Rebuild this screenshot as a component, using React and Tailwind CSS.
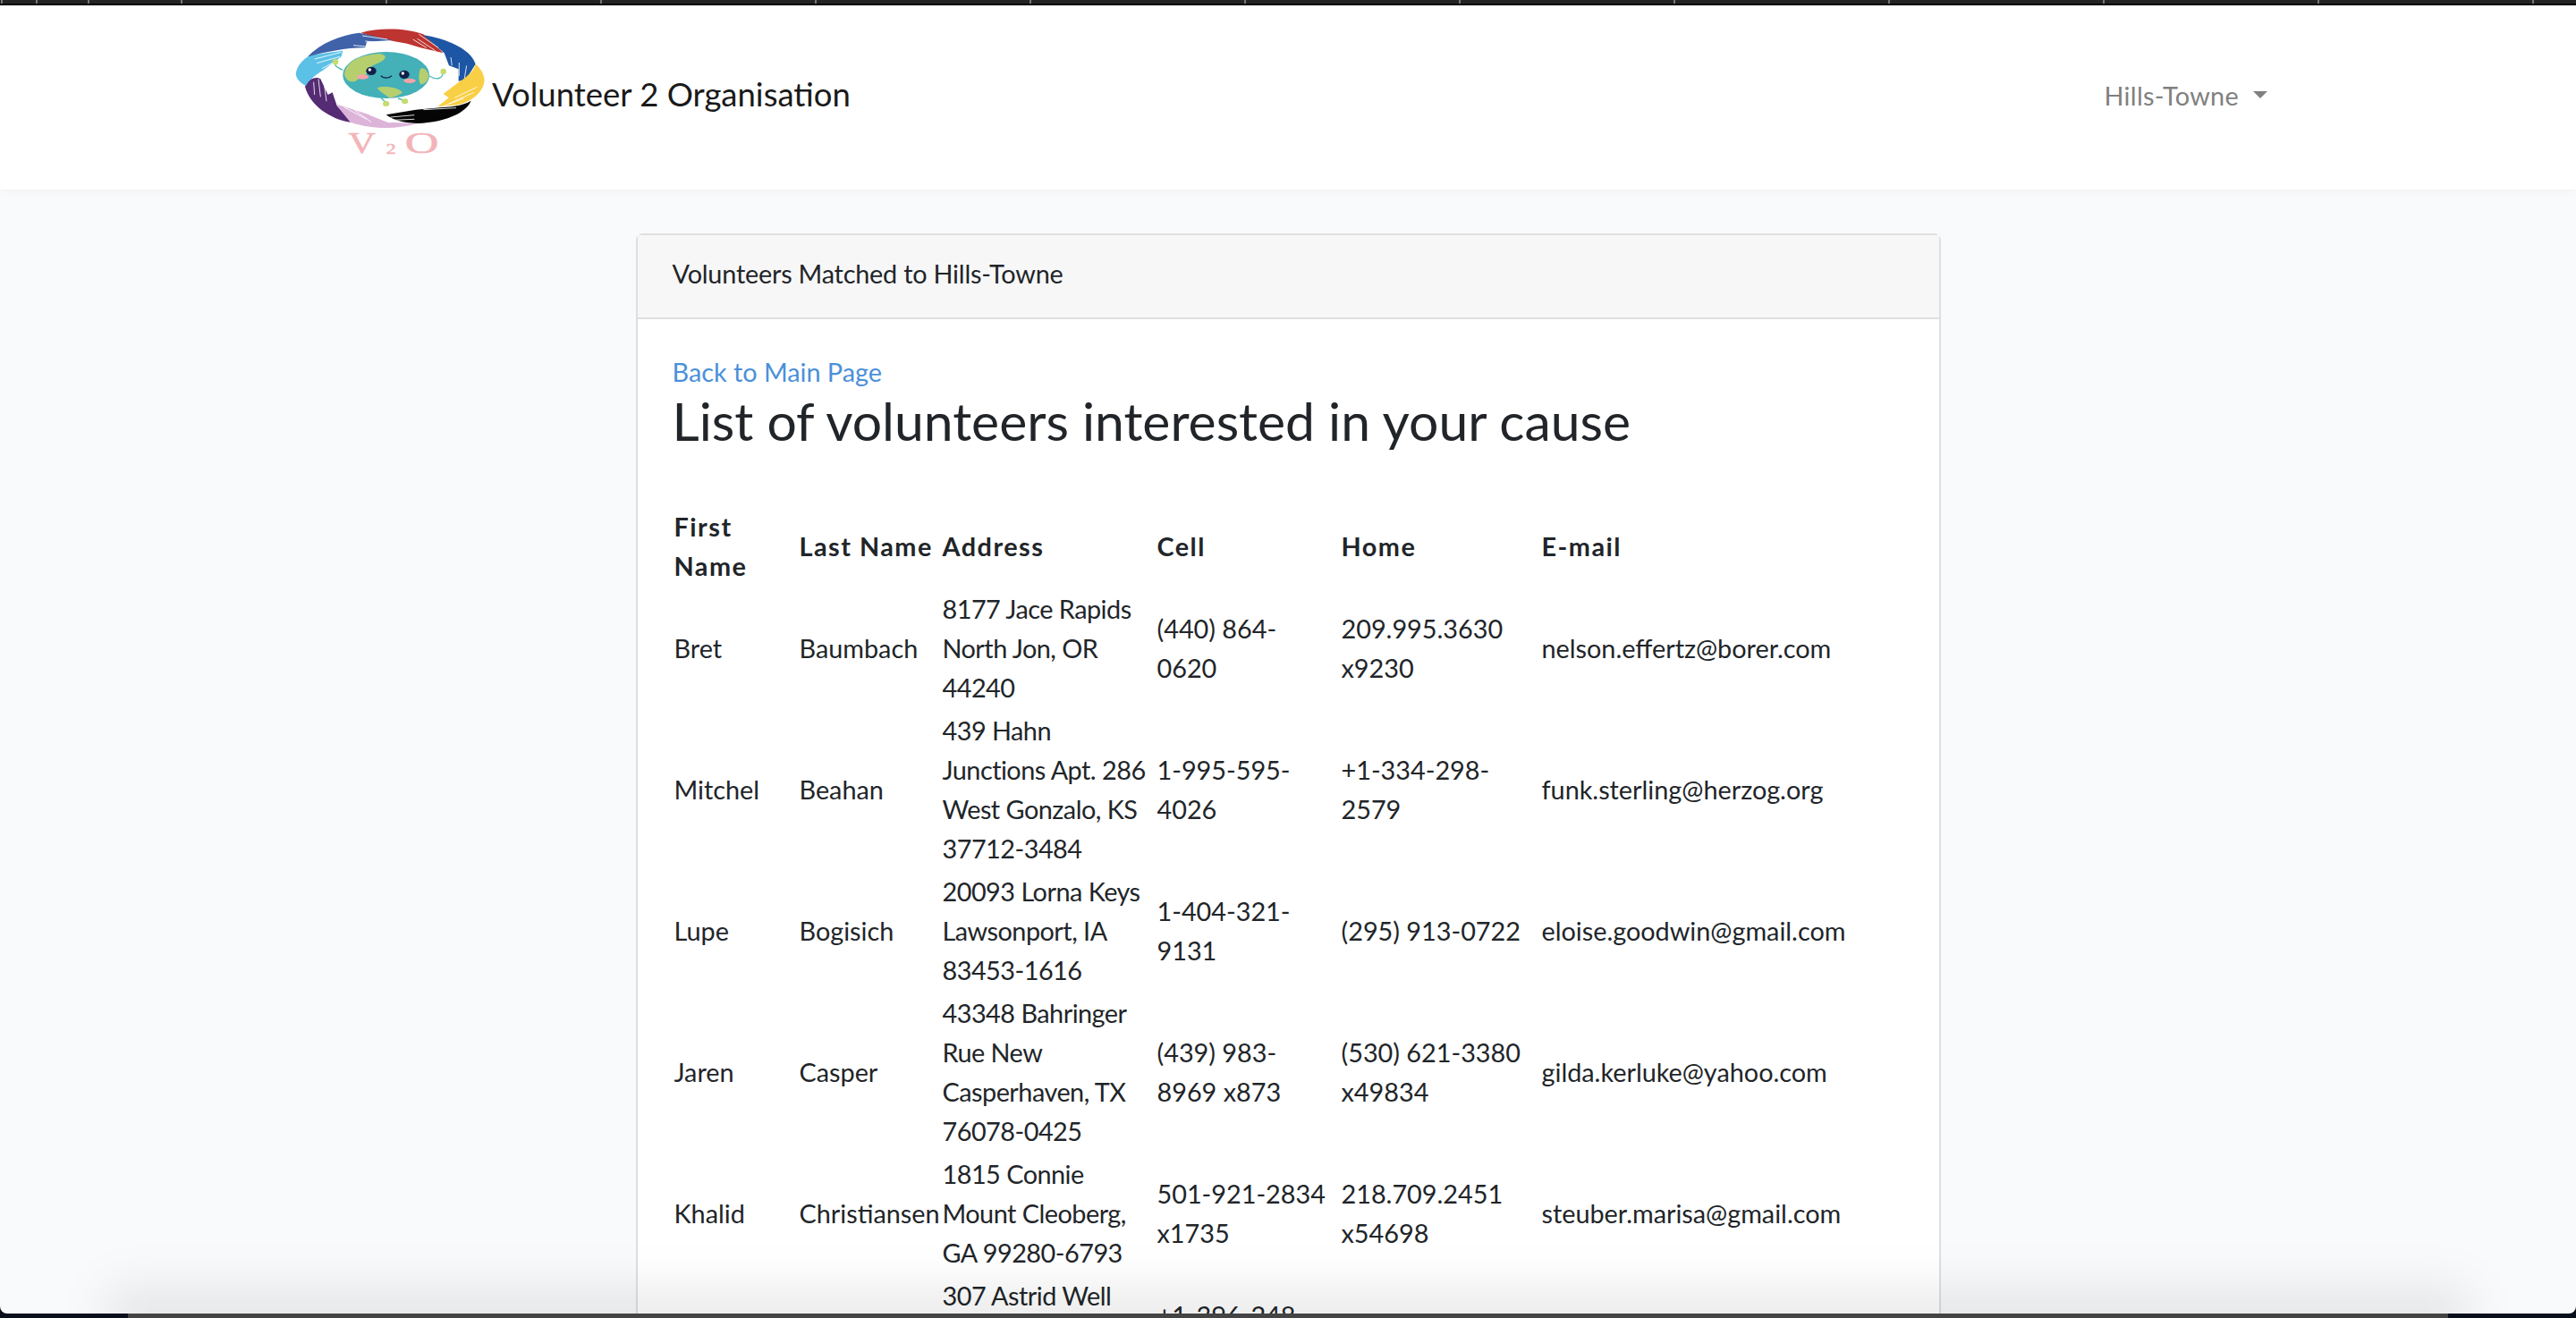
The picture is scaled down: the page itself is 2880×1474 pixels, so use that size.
import React from "react";

const volunteers = [
  { first: "Bret", last: "Baumbach", address: "8177 Jace Rapids North Jon, OR 44240", cell: "(440) 864-0620", home: "209.995.3630 x9230", email: "nelson.effertz@borer.com" },
  { first: "Mitchel", last: "Beahan", address: "439 Hahn Junctions Apt. 286 West Gonzalo, KS 37712-3484", cell: "1-995-595-4026", home: "+1-334-298-2579", email: "funk.sterling@herzog.org" },
  { first: "Lupe", last: "Bogisich", address: "20093 Lorna Keys Lawsonport, IA 83453-1616", cell: "1-404-321-9131", home: "(295) 913-0722", email: "eloise.goodwin@gmail.com" },
  { first: "Jaren", last: "Casper", address: "43348 Bahringer Rue New Casperhaven, TX 76078-0425", cell: "(439) 983-8969 x873", home: "(530) 621-3380 x49834", email: "gilda.kerluke@yahoo.com" },
  { first: "Khalid", last: "Christiansen", address: "1815 Connie Mount Cleoberg, GA 99280-6793", cell: "501-921-2834 x1735", home: "218.709.2451 x54698", email: "steuber.marisa@gmail.com" },
  // only the top of this row shows above the fold
  { first: "", last: "", address: "307 Astrid Well Port Ellis, MN 20518", cell: "+1-396-248-1190", home: "", email: "" },
];

const ticks = [1, 40, 98, 202, 431, 671, 911, 1151, 1391, 1631, 1871, 2111, 2351, 2591, 2831];

const Logo = () => (
  <svg viewBox="0 0 660 510" className="w-[220px] h-[170px] shrink-0">
    {/* hands */}
    <path fill="#bd3430" d="M220 50C280 32 370 33 430 55L497 118L420 100L375 86C320 76 260 64 220 50Z" />
    <path fill="#1d56a4" d="M430 58C510 70 590 105 605 155L572 208L548 212L548 172L516 160L500 118Z" />
    <path fill="#f9cf45" d="M605 155C630 175 640 205 632 225C620 258 590 280 545 292L478 298L515 268L497 255L540 222C572 200 600 180 605 155Z" />
    <path fill="#050505" d="M305 325L405 308L495 300C540 298 570 290 590 278C570 325 490 352 410 354C370 354 330 345 305 325Z" />
    <path fill="#dcb4d9" d="M140 290L240 322L310 350L410 354C330 378 240 372 170 345Z" />
    <path fill="#552b74" d="M33 230C40 205 70 195 85 205L110 258L125 250L140 295L185 350C120 340 50 295 33 230Z" />
    <path fill="#5cc1e6" d="M2 190C5 160 25 140 50 125L160 110L155 130L95 175C70 190 45 210 36 228C18 220 5 205 2 190Z" />
    <path fill="#3f62a8" d="M42 130C85 85 150 58 215 50L325 75L240 80L235 100C170 100 100 115 42 130Z" />
    {/* fingers */}
    <g stroke="#fff" strokeWidth="2.5" fill="none">
      <path d="M225 60L310 72M235 78L295 84M195 92L238 96" />
      <path d="M415 55L480 100M410 70L470 110M395 72L440 100" />
      <path d="M522 132L526 160M550 150L550 195M575 160L568 202" />
      <path d="M610 232L535 268M600 250L515 288M565 270L495 297" />
      <path d="M320 333L400 326M325 343L400 340M430 308L540 302" />
      <path d="M165 300L240 340M185 298L255 350M250 325L320 352" />
      <path d="M62 215L65 258M78 205L85 265M96 212L105 280" />
      <path d="M65 138L155 115M72 152L150 130M90 170L135 146" />
    </g>
    {/* earth */}
    <path d="M160 175C140 165 130 160 135 150M450 195C475 210 495 205 497 180M285 265L305 285M345 270L368 278" stroke="#4db8b0" strokeWidth="4" fill="none" />
    <circle cx="135" cy="148" r="10" fill="#c4dc70" />
    <circle cx="497" cy="180" r="10" fill="#c4dc70" />
    <ellipse cx="305" cy="288" rx="11" ry="9" fill="#c4dc70" />
    <ellipse cx="368" cy="280" rx="11" ry="9" fill="#c4dc70" />
    <ellipse cx="305" cy="192" rx="145" ry="78" fill="#44b0b8" />
    <path fill="#b5cf6f" d="M165 190C170 150 210 125 280 120C320 125 300 145 270 155C240 165 250 195 215 200C200 225 170 215 165 190Z" />
    <path fill="#b5cf6f" d="M275 235C300 225 350 235 360 250C345 262 325 268 315 268C300 255 285 250 275 235Z" />
    <path fill="#b5cf6f" d="M420 170C435 165 445 180 448 195C445 215 430 225 420 222C412 205 415 185 420 170Z" />
    <ellipse cx="255" cy="178" rx="17" ry="14" fill="#10204a" />
    <ellipse cx="366" cy="190" rx="17" ry="14" fill="#10204a" />
    <circle cx="250" cy="174" r="5" fill="#fff" />
    <circle cx="361" cy="186" r="5" fill="#fff" />
    <path d="M288 194C295 204 315 204 324 194" stroke="#10204a" strokeWidth="4" fill="none" />
    <ellipse cx="226" cy="198" rx="20" ry="8" fill="#f5a3a6" />
    <ellipse cx="384" cy="211" rx="20" ry="8" fill="#f5a3a6" />
    {/* wordmark */}
    <g fontFamily="'Liberation Serif', serif" fill="#f3b4b8" stroke="#f3b4b8" strokeWidth="1.5">
      <text transform="translate(178 454) scale(1.3 1)" fontSize="98">V</text>
      <text transform="translate(305 456) scale(1.3 1)" fontSize="50">2</text>
      <text transform="translate(368 454) scale(1.6 1)" fontSize="98">O</text>
    </g>
  </svg>
);

const App = () => {
  return (
    <div className="flex flex-col h-screen overflow-hidden bg-[#0a0f1c] font-['Lato',sans-serif] text-[28.8px] leading-[44px] text-[#212529]">
      <div className="relative flex-1 min-h-0 flex flex-col overflow-hidden bg-[#f8fafc] rounded-b-[8px]">
        {/* top strip */}
        <div className="relative h-[6px] shrink-0 bg-[#242424] border-b-2 border-black">
          {ticks.map((x) => (
            <span key={x} className="absolute top-0 h-[4px] w-[2px] bg-[#777]" style={{ left: x }} />
          ))}
        </div>

        <nav className="h-[206px] shrink-0 bg-white shadow-[0_2px_8px_rgba(0,0,0,0.04)] flex items-center justify-between pb-[8px] pl-[330px] pr-[345px]">
          <div className="flex items-center">
            <Logo />
            <span className="text-[36.5px] text-[#1a1a1a]">Volunteer 2 Organisation</span>
          </div>
          <div className="flex items-center mt-[4px] text-[#808080]">
            <span className="tracking-[0.3px]">Hills-Towne</span>
            <span className="ml-[16px] mt-[-2px] w-0 h-0 border-x-[8px] border-x-transparent border-t-[8px] border-t-[#808080]" />
          </div>
        </nav>

        <main className="flex justify-center pt-[49px]">
          <div className="w-[1459px] shrink-0 bg-white border-2 border-[#dfdfdf] rounded-[8px]">
            <div className="h-[94px] flex items-center px-[39px] pb-[6px] tracking-[-0.2px] bg-[#f7f7f7] border-b-2 border-[#dfdfdf]">
              Volunteers Matched to Hills-Towne
            </div>
            <div className="px-[39px] pt-[37px]">
              <a className="block text-[#4a90d9]">Back to Main Page</a>
              <h2 className="text-[58.8px] leading-[66px] text-[#212529]">List of volunteers interested in your cause</h2>
              <table className="mt-[61px] table-fixed w-[1300px] border-collapse">
                <colgroup>
                  <col className="w-[140px]" />
                  <col className="w-[160px]" />
                  <col className="w-[240px]" />
                  <col className="w-[206px]" />
                  <col className="w-[224px]" />
                  <col />
                </colgroup>
                <thead>
                  <tr className="tracking-[1.5px]">
                    <th className="p-[2px] font-bold text-left">First Name</th>
                    <th className="p-[2px] font-bold text-left">Last Name</th>
                    <th className="p-[2px] font-bold text-left">Address</th>
                    <th className="p-[2px] font-bold text-left">Cell</th>
                    <th className="p-[2px] font-bold text-left">Home</th>
                    <th className="p-[2px] font-bold text-left">E-mail</th>
                  </tr>
                </thead>
                <tbody>
                  {volunteers.map((v) => (
                    <tr key={v.address}>
                      <td className="p-[2px]">{v.first}</td>
                      <td className="p-[2px] whitespace-nowrap">{v.last}</td>
                      <td className="p-[2px] tracking-[-0.5px]">{v.address}</td>
                      <td className="py-[2px] pl-[2px] pr-[6px]">{v.cell}</td>
                      <td className="p-[2px]">{v.home}</td>
                      <td className="p-[2px]">{v.email}</td>
                    </tr>
                  ))}
                </tbody>
              </table>
            </div>
          </div>
        </main>

        {/* soft shadow of the window edge */}
        <div className="pointer-events-none absolute bottom-[-30px] left-[120px] right-[120px] h-[60px] bg-black/[0.08] blur-[25px]" />
      </div>

      <div className="h-[5px] shrink-0 mx-[143px] bg-[#444]" />
    </div>
  );
};

export default App;
